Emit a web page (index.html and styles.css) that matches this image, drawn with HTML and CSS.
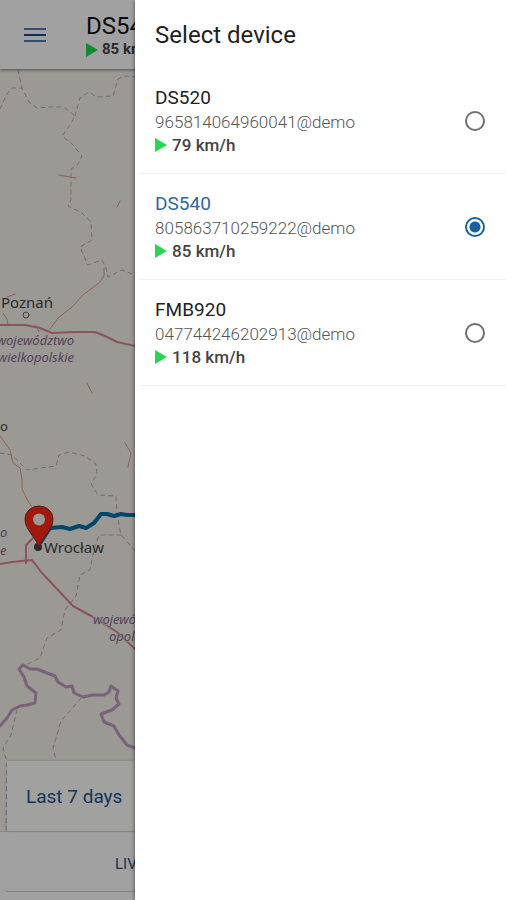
FILE: index.html
```html
<!DOCTYPE html>
<html lang="en">
<head>
<meta charset="utf-8">
<meta name="viewport" content="width=device-width, initial-scale=1">
<title>Select device</title>
<link rel="stylesheet" href="styles.css">
</head>
<body>
<div class="app">
  <header class="topbar">
    <button class="menu" type="button" aria-label="Menu">
      <svg width="24" height="18" viewBox="0 0 24 18" fill="none" stroke="#1c4f94" stroke-width="2">
        <path d="M1 2H23" opacity=".75"/><path d="M1 8H23"/><path d="M1 14H23" opacity=".75"/>
      </svg>
    </button>
    <div class="current">
      <div class="current-name">DS540</div>
      <div class="speed speed-small"><svg class="arrow" viewBox="0 0 12 14"><path d="M0 0L12 7L0 14Z"/></svg>85 km/h</div>
    </div>
  </header>

  <main class="map">
    <svg class="map-canvas" viewBox="0 69 506 762" preserveAspectRatio="xMinYMin slice" fill="none" stroke-linejoin="round" stroke-linecap="round">
      <g class="border-minor">
        <path d="M0 109L7 94L12 88L22 88L29 102L37 108L50 107L64 107L75 116L70 125L62 136L72 144L82 156L78 164L71 169L71 182L71 200L68 206L82 213L91 222L92 240L80 247L88 265L102 260L106 268L108 277L122 270L135 275"/>
        <path d="M18 70L22 88"/>
        <path d="M75 116L80 98L89 92L97 97L113 96L118 79L126 76L135 77"/>
        <path d="M0 453L12 455L27 470L56 466L59 455L69 452L85 456L96 464L97 474L91 484L98 495L116 496L117 514L121 535L130 545L135 551"/>
        <path d="M121 535L99 535L94 550L90 570L80 575L76 596L65 610L61 630L47 638L40 658L24 666"/>
        <path d="M81 698L69 712L61 721L56 738L53 748L56 760"/>
        <path d="M17 710L11 735L3 748L7 762L6 831"/>
      </g>
      <g class="border-state">
        <path d="M0 726L7 718L12 710L20 706L27 705L35 703L36 693L27 686L24 677L19 669L23 665L30 669L37 669L47 673L55 676L58 682L66 687L72 686L74 693L83 697L93 695L104 695L109 692L111 686L118 691L116 698L119 704L112 710L101 714L104 722L114 726L119 735L127 745L135 748"/>
      </g>
      <g class="road-minor">
        <path d="M50 329L58 318L72 307L84 294L99 283L104 276L104 268"/>
        <path d="M8 325L7 319L3 313M7 297L15 294M35 325L39 332M87 383L92 393M59 175L76 178M117 207L120 201"/>
        <path d="M0 436L10 450L13 463L20 468L22 480L22 489L28 501L35 512"/>
        <path d="M125 443L131 453L128 467"/>
      </g>
      <g class="road-major">
        <path d="M0 325L25 325L40 328L52 333L75 332L95 332L105 336L117 342L135 346"/>
        <path d="M0 564L12 562L32 560L42 573L57 589L73 606L93 617L117 632L135 649"/>
        <path d="M26 563L26 545L33 538"/>
      </g>
      <path class="track" d="M41 542L50 528L62 527L70 529L79 526L86 528L94 523L101 514L107 514L114 516L121 514L127 515L140 515L200 515"/>
      <circle class="town" cx="26" cy="315" r="3"/>
      <text class="city" x="1" y="308">Poznań</text>
      <text class="region" x="74" y="345" text-anchor="end">województwo</text>
      <text class="region" x="74" y="362" text-anchor="end">wielkopolskie</text>
      <text class="city small" x="0" y="431">o</text>
      <text class="region" x="0" y="537">o</text>
      <text class="region" x="0" y="555">e</text>
      <text class="region" x="93" y="624">województwo</text>
      <text class="region" x="109" y="641">opolskie</text>
      <circle cx="38" cy="547" r="4" fill="#444"/>
      <path class="pin" d="M39 547C35 536 25 530 25 519A14 13 0 0 1 53 519C53 530 43 536 39 547Z"/>
      <circle cx="39" cy="519.500" r="6" fill="#f6f3ee"/>
      <text class="city" x="44" y="553">Wrocław</text>
    </svg>
    <button class="period" type="button">Last 7 days</button>
  </main>

  <nav class="tabs"><button class="tab" type="button">LIVE</button></nav>
  <div class="scrim"></div>

  <aside class="drawer">
    <h1 class="drawer-title">Select device</h1>
    <form class="devices">
      <label class="device" for="ds520">
        <span class="info">
          <span class="name">DS520</span>
          <span class="ident">965814064960041@demo</span>
          <span class="speed"><svg class="arrow" viewBox="0 0 12 14"><path d="M0 0L12 7L0 14Z"/></svg>79 km/h</span>
        </span>
        <input class="radio" type="radio" name="device" id="ds520">
      </label>
      <label class="device selected" for="ds540">
        <span class="info">
          <span class="name">DS540</span>
          <span class="ident">805863710259222@demo</span>
          <span class="speed"><svg class="arrow" viewBox="0 0 12 14"><path d="M0 0L12 7L0 14Z"/></svg>85 km/h</span>
        </span>
        <input class="radio" type="radio" name="device" id="ds540" checked>
      </label>
      <label class="device" for="fmb920">
        <span class="info">
          <span class="name">FMB920</span>
          <span class="ident">047744246202913@demo</span>
          <span class="speed"><svg class="arrow" viewBox="0 0 12 14"><path d="M0 0L12 7L0 14Z"/></svg>118 km/h</span>
        </span>
        <input class="radio" type="radio" name="device" id="fmb920">
      </label>
    </form>
  </aside>
</div>
</body>
</html>
```
FILE: styles.css
```css
* { box-sizing: border-box; }

body {
  margin: 0;
  font-family: Roboto, "Liberation Sans", sans-serif;
  color: #222;
}

button {
  border: 0;
  padding: 0;
  background: none;
  font: inherit;
  color: #1c5590;
}

.app {
  position: relative;
  display: flex;
  flex-direction: column;
  min-height: 100vh;
  overflow: hidden;
  background: #fff;
}

.topbar {
  display: flex;
  align-items: center;
  gap: 39px;
  padding: 12px 23px 10px;
  z-index: 1;
  box-shadow: 0 1px 3px rgba(0, 0, 0, .5);
}

.menu { display: flex; }

.current-name {
  font-size: 24px;
  line-height: 28px;
  color: #111;
}

.map {
  flex: 1;
  display: flex;
  flex-direction: column;
  justify-content: flex-end;
  position: relative;
  background: #f5f2eb;
}

.map-canvas {
  position: absolute;
  inset: 0;
  width: 100%;
  height: 100%;
}

.border-minor { stroke: #bdaab8; stroke-width: 1; stroke-dasharray: 4 4; }
.border-state { stroke: #c19cc2; stroke-width: 3; }
.road-minor { stroke: #e49a92; stroke-width: 1; }
.road-major { stroke: #d98590; stroke-width: 2; }
.track { stroke: #0072a8; stroke-width: 4; }
.town { fill: #f5f2eb; stroke: #666; }
.pin { fill: #ff2814; stroke: #7d3027; }

.city, .region {
  font-family: "Noto Sans", sans-serif;
  font-size: 15px;
  fill: #444;
  paint-order: stroke;
  stroke: #f5f2eb;
  stroke-width: 1;
}

.small { font-size: 13px; }

.region {
  font-size: 13px;
  font-style: italic;
  fill: #856a92;
}

.period {
  position: relative;
  margin: 0 7px;
  padding: 0 19px;
  height: 70px;
  background: rgba(255, 255, 255, .95);
  box-shadow: 0 0 3px rgba(0, 0, 0, .15);
  font-size: 19px;
  text-align: left;
}

.tabs {
  display: flex;
  padding: 0 0 8px 6px;
  border-top: 1px solid #ddd;
}

.tab {
  flex: 1;
  height: 60px;
  padding: 4px 0 0 109px;
  border-bottom: 1px solid #ccc;
  font-size: 15px;
  text-align: left;
}

.scrim {
  position: absolute;
  inset: 0;
  z-index: 2;
  background: rgba(0, 0, 0, .37);
}

.drawer {
  position: absolute;
  inset: 0 0 0 auto;
  width: 73.3%;
  z-index: 3;
  background: #fff;
  box-shadow: 0 0 4px rgba(0, 0, 0, .6);
}

.drawer-title {
  margin: 0;
  padding: 19px 20px 17px;
  font-size: 24px;
  line-height: 32px;
  font-weight: 400;
}

.device {
  display: flex;
  align-items: center;
  justify-content: space-between;
  margin-left: 4px;
  padding: 18px 21px 17px 16px;
  border-bottom: 1px solid #f1f3f3;
}

.info {
  display: flex;
  flex-direction: column;
}

.name {
  font-size: 19px;
  line-height: 24px;
}

.selected .name { color: #2f68a3; }

.ident {
  font-size: 17px;
  line-height: 24px;
  font-weight: 300;
  color: #555;
}

.speed {
  display: flex;
  align-items: center;
  gap: 5px;
  font-size: 17px;
  line-height: 22px;
  font-weight: 500;
  color: #444;
}

.speed-small {
  gap: 4px;
  font-size: 15px;
  line-height: 19px;
  font-weight: 700;
}

.arrow {
  width: 12px;
  height: 14px;
  fill: #27d653;
}

.radio {
  appearance: none;
  width: 20px;
  height: 20px;
  margin: 0;
  border: 2px solid #707070;
  border-radius: 50%;
}

.radio:checked {
  border-color: #1c5fa0;
  background: radial-gradient(circle, #1c5fa0 5px, #fff 6px);
}
```
